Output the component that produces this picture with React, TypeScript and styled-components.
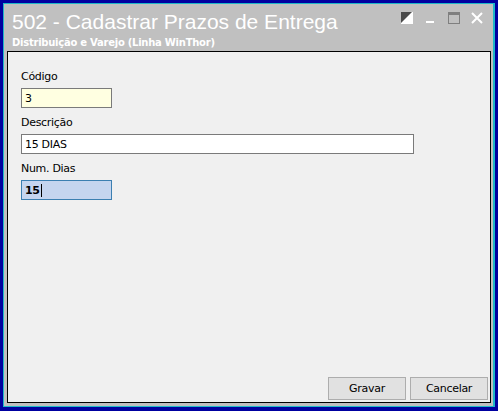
import React from "react";
import styled, { createGlobalStyle } from "styled-components";

const Global = createGlobalStyle`
  html, body { margin: 0; padding: 0; background: #0000a0; }
  body { width: 498px; height: 411px; overflow: hidden; }
`;

const Frame = styled.div`
  box-sizing: border-box;
  width: 498px;
  height: 411px;
  background: #0000a0;
  padding: 3px 3px 4px 3px;
  display: flex;
`;

const Window = styled.div`
  box-sizing: border-box;
  flex: 1;
  display: flex;
  flex-direction: column;
  background: #c0c0c0;
  border-style: solid;
  border-color: #1fb8c8;
  border-width: 1px 2px 1px 1px;
  padding: 0 2px 3px 3px;
`;

const TitleBar = styled.div`
  height: 47px;
  display: flex;
  flex-direction: column;
  position: relative;
  padding-left: 5px;
  color: #ffffff;
`;

const Title = styled.div`
  font-family: "Liberation Sans", Arial, sans-serif;
  font-size: 21px;
  line-height: 24px;
  margin-top: 6px;
  white-space: nowrap;
`;

const Subtitle = styled.div`
  font-family: "DejaVu Sans", Verdana, sans-serif;
  font-weight: bold;
  font-size: 10px;
  line-height: 14px;
  margin-top: 2px;
  letter-spacing: -0.25px;
  white-space: nowrap;
`;

const Controls = styled.div`
  position: absolute;
  top: 8px;
  right: 3px;
  display: flex;
  align-items: center;
`;

const Ctrl = styled.div<{ $w: number }>`
  width: ${(p) => p.$w}px;
  height: 12px;
  display: flex;
  justify-content: center;
`;

const Panel = styled.div`
  box-sizing: border-box;
  flex: 1;
  background: #f0f0f0;
  border: 1px solid #000000;
  display: flex;
  flex-direction: column;
  padding: 18px 2px 2px 13px;
  font-family: "DejaVu Sans", Tahoma, sans-serif;
  font-size: 11px;
  color: #000;
`;

const Fields = styled.div`
  display: flex;
  flex-direction: column;
  gap: 8px;
  flex: 1;
`;

const Field = styled.div`
  display: flex;
  flex-direction: column;
`;

const Label = styled.div`
  line-height: 14px;
  height: 14px;
  margin-bottom: 4px;
  letter-spacing: -0.3px;
`;

const Input = styled.div<{ $w: number; $bg: string; $border: string; $bold?: boolean }>`
  box-sizing: border-box;
  width: ${(p) => p.$w}px;
  height: 20px;
  background: ${(p) => p.$bg};
  border: 1px solid ${(p) => p.$border};
  padding: 0 3px;
  display: flex;
  align-items: center;
  font-weight: ${(p) => (p.$bold ? "bold" : "normal")};
  letter-spacing: -0.3px;
`;

const Caret = styled.span`
  display: inline-block;
  width: 1px;
  height: 13px;
  background: #000;
  margin-left: 1px;
`;

const Buttons = styled.div`
  display: flex;
  justify-content: flex-end;
  gap: 4px;
`;

const Button = styled.div`
  box-sizing: border-box;
  width: 78px;
  height: 23px;
  background: #e1e1e1;
  border: 1px solid #adadad;
  display: flex;
  align-items: center;
  justify-content: center;
  letter-spacing: -0.3px;
`;

export default function App() {
  return (
    <>
      <Global />
      <Frame>
        <Window>
          <TitleBar>
            <Title>502 - Cadastrar Prazos de Entrega</Title>
            <Subtitle>Distribuição e Varejo (Linha WinThor)</Subtitle>
            <Controls>
              <Ctrl $w={22}>
                <svg width="12" height="12" viewBox="0 0 12 12">
                  <rect x="0" y="0" width="12" height="12" fill="#ffffff" />
                  <polygon points="0,0 11,0 0,11" fill="#4a4a4a" />
                </svg>
              </Ctrl>
              <Ctrl $w={24}>
                <svg width="10" height="12" viewBox="0 0 10 12">
                  <rect x="1" y="9" width="8" height="2" fill="#ffffff" />
                </svg>
              </Ctrl>
              <Ctrl $w={24}>
                <svg width="12" height="12" viewBox="0 0 12 12">
                  <rect x="0.5" y="0.5" width="11" height="11" fill="none" stroke="#7f7f7f" />
                  <rect x="0" y="0" width="12" height="3" fill="#7f7f7f" />
                </svg>
              </Ctrl>
              <Ctrl $w={22}>
                <svg width="12" height="12" viewBox="0 0 12 12">
                  <path d="M1 1 L11 11 M11 1 L1 11" stroke="#ffffff" strokeWidth="2" />
                </svg>
              </Ctrl>
            </Controls>
          </TitleBar>
          <Panel>
            <Fields>
              <Field>
                <Label>Código</Label>
                <Input $w={91} $bg="#ffffe1" $border="#7a7a7a">3</Input>
              </Field>
              <Field>
                <Label>Descrição</Label>
                <Input $w={393} $bg="#ffffff" $border="#7a7a7a">15 DIAS</Input>
              </Field>
              <Field>
                <Label>Num. Dias</Label>
                <Input $w={91} $bg="#c5d5ef" $border="#3c7fb1" $bold>
                  15<Caret />
                </Input>
              </Field>
            </Fields>
            <Buttons>
              <Button>Gravar</Button>
              <Button>Cancelar</Button>
            </Buttons>
          </Panel>
        </Window>
      </Frame>
    </>
  );
}
